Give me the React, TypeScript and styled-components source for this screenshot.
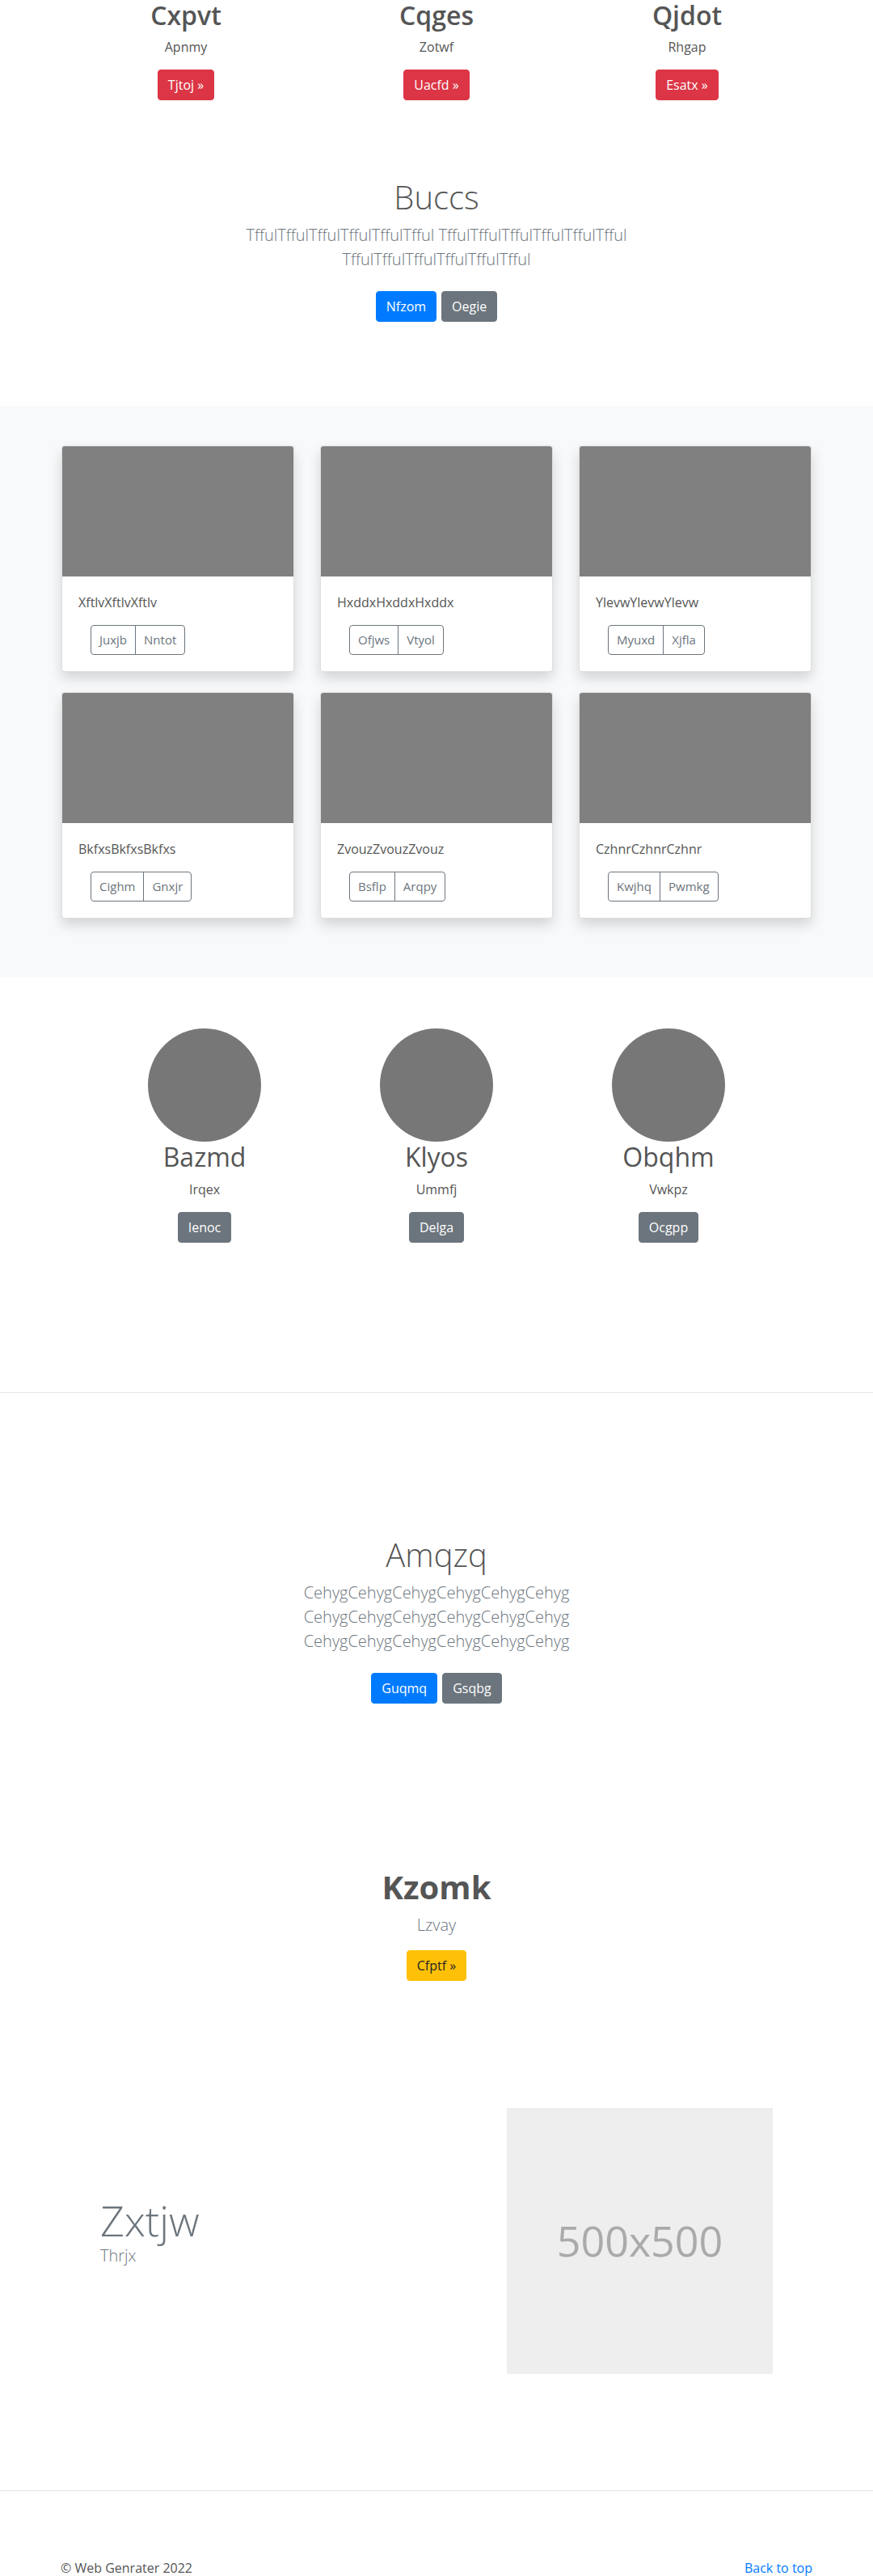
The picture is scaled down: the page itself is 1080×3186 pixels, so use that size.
import React from "react";
import styled, { createGlobalStyle, css } from "styled-components";

const GlobalStyle = createGlobalStyle`
  * { box-sizing: border-box; }
  html, body { margin: 0; padding: 0; }
  body {
    font-family: "Open Sans", "Noto Sans", "Liberation Sans", sans-serif;
    font-size: 16px;
    line-height: 1.5;
    color: #555;
    background: #fff;
  }
  h1, h2, p { margin: 0; }
`;

type Variant = "primary" | "secondary" | "danger" | "warning";

const variants: Record<Variant, ReturnType<typeof css>> = {
  primary: css`background: #007bff; border-color: #007bff; color: #fff;`,
  secondary: css`background: #6c757d; border-color: #6c757d; color: #fff;`,
  danger: css`background: #dc3545; border-color: #dc3545; color: #fff;`,
  warning: css`background: #ffc107; border-color: #ffc107; color: #212529;`,
};

const Btn = styled.a<{ $variant: Variant }>`
  display: inline-block;
  font-size: 16px;
  line-height: 24px;
  padding: 6px 12px;
  border: 1px solid transparent;
  border-radius: 4px;
  text-decoration: none;
  cursor: pointer;
  ${(p) => variants[p.$variant]}
`;

const Container = styled.div`
  max-width: 960px;
  margin: 0 auto;
  padding: 0 15px;
`;

/* ---------- Features ---------- */
const FeatureSection = styled.section`
  padding: 0;
`;

const ThreeCols = styled.div<{ $width?: number }>`
  display: grid;
  grid-template-columns: repeat(3, 1fr);
  max-width: ${(p) => p.$width ?? 960}px;
  margin: 0 auto;
  text-align: center;
`;

const FeatureTitle = styled.h2`
  font-size: 32px;
  font-weight: 600;
  line-height: 1.2;
  margin-bottom: 8px;
  color: #555;
`;

const BodyText = styled.p`
  margin-bottom: 16px;
`;

/* ---------- Hero / CTA ---------- */
const HeroSection = styled.section<{ $pt: number; $pb: number }>`
  padding: ${(p) => p.$pt}px 0 ${(p) => p.$pb}px;
  text-align: center;
`;

const HeroInner = styled.div`
  max-width: 520px;
  margin: 0 auto;
`;

const LightTitle = styled.h1`
  font-size: 40px;
  font-weight: 300;
  line-height: 1.2;
  margin-bottom: 8px;
  color: #555;
`;

const Lead = styled.p`
  font-size: 20px;
  font-weight: 300;
  line-height: 1.5;
  color: #6c757d;
  margin-bottom: 16px;
`;

const ButtonRow = styled.div`
  display: flex;
  justify-content: center;
  gap: 6px;
  padding: 8px 0;
`;

/* ---------- Album ---------- */
const AlbumSection = styled.section`
  background: #f8f9fa;
  padding: 49px 0 72px;
`;

const CardGrid = styled.div`
  display: grid;
  grid-template-columns: repeat(3, 288px);
  justify-content: center;
  column-gap: 32px;
  row-gap: 25px;
`;

const Card = styled.div`
  background: #fff;
  border: 1px solid rgba(0, 0, 0, 0.125);
  border-radius: 4px;
  overflow: hidden;
  box-shadow: 0 8px 16px rgba(0, 0, 0, 0.15);
`;

const CardImage = styled.div`
  height: 161px;
  background: #808080;
`;

const CardBody = styled.div`
  padding: 20px;
`;

const CardText = styled.p`
  margin-bottom: 16px;
`;

const BtnGroup = styled.div`
  display: inline-flex;
  margin-left: 15px;
`;

const GroupBtn = styled.button<{ $first?: boolean }>`
  font-family: inherit;
  font-size: 15px;
  line-height: 23px;
  padding: 6px 10px;
  background: transparent;
  color: #6c757d;
  border: 1px solid #6c757d;
  border-radius: ${(p) => (p.$first ? "4px 0 0 4px" : "0 4px 4px 0")};
  margin-left: ${(p) => (p.$first ? "0" : "-1px")};
  cursor: pointer;
`;

/* ---------- Team ---------- */
const TeamSection = styled.section`
  padding: 64px 0 185px;
`;

const Avatar = styled.div`
  width: 140px;
  height: 140px;
  border-radius: 50%;
  background: #777;
  margin: 0 auto;
`;

const MemberName = styled.h2`
  font-size: 32px;
  font-weight: 400;
  line-height: 1.2;
  margin-bottom: 8px;
  color: #555;
`;

const Divider = styled.hr`
  margin: 0;
  border: 0;
  border-top: 1px solid #e5e5e5;
`;

/* ---------- Kzomk ---------- */
const BoldTitle = styled.h1`
  font-size: 40px;
  font-weight: 700;
  line-height: 1.2;
  margin-bottom: 8px;
  color: #555;
`;

/* ---------- Split ---------- */
const SplitSection = styled.section`
  padding: 157px 124px 144px;
  display: grid;
  grid-template-columns: 1fr 329px;
  align-items: center;
`;

const SplitText = styled.div`
  margin-bottom: 24px;
`;

const DisplayTitle = styled.h1`
  font-size: 52px;
  font-weight: 300;
  line-height: 1.2;
  color: #6c757d;
`;

const Muted = styled.p`
  font-size: 20px;
  font-weight: 300;
  line-height: 1.3;
  color: #6c757d;
`;

const Placeholder = styled.div`
  width: 329px;
  height: 329px;
  background: #eee;
  color: #aaa;
  font-size: 52px;
  display: flex;
  align-items: center;
  justify-content: center;
`;

/* ---------- Footer ---------- */
const Footer = styled.footer`
  padding: 83px 0 48px;
`;

const FooterRow = styled.div`
  display: flex;
  justify-content: space-between;
  align-items: center;
`;

const FooterLink = styled.a`
  color: #007bff;
  text-decoration: none;
`;

const features = [
  { t: "Cxpvt", s: "Apnmy", b: "Tjtoj »" },
  { t: "Cqges", s: "Zotwf", b: "Uacfd »" },
  { t: "Qjdot", s: "Rhgap", b: "Esatx »" },
];

const cards = [
  { text: "XftlvXftlvXftlv", a: "Juxjb", b: "Nntot" },
  { text: "HxddxHxddxHxddx", a: "Ofjws", b: "Vtyol" },
  { text: "YlevwYlevwYlevw", a: "Myuxd", b: "Xjfla" },
  { text: "BkfxsBkfxsBkfxs", a: "Cighm", b: "Gnxjr" },
  { text: "ZvouzZvouzZvouz", a: "Bsflp", b: "Arqpy" },
  { text: "CzhnrCzhnrCzhnr", a: "Kwjhq", b: "Pwmkg" },
];

const team = [
  { n: "Bazmd", r: "Irqex", b: "Ienoc" },
  { n: "Klyos", r: "Ummfj", b: "Delga" },
  { n: "Obqhm", r: "Vwkpz", b: "Ocgpp" },
];

export default function App() {
  return (
    <>
      <GlobalStyle />
      <FeatureSection>
        <Container>
          <ThreeCols>
            {features.map((f) => (
              <div key={f.t}>
                <FeatureTitle>{f.t}</FeatureTitle>
                <BodyText>{f.s}</BodyText>
                <Btn $variant="danger">{f.b}</Btn>
              </div>
            ))}
          </ThreeCols>
        </Container>
      </FeatureSection>

      <HeroSection $pt={96} $pb={96}>
        <HeroInner>
          <LightTitle>Buccs</LightTitle>
          <Lead>
            TffulTffulTffulTffulTffulTfful TffulTffulTffulTffulTffulTfful TffulTffulTffulTffulTffulTfful
          </Lead>
          <ButtonRow>
            <Btn $variant="primary">Nfzom</Btn>
            <Btn $variant="secondary">Oegie</Btn>
          </ButtonRow>
        </HeroInner>
      </HeroSection>

      <AlbumSection>
        <CardGrid>
          {cards.map((c) => (
            <Card key={c.text}>
              <CardImage />
              <CardBody>
                <CardText>{c.text}</CardText>
                <BtnGroup>
                  <GroupBtn $first>{c.a}</GroupBtn>
                  <GroupBtn>{c.b}</GroupBtn>
                </BtnGroup>
              </CardBody>
            </Card>
          ))}
        </CardGrid>
      </AlbumSection>

      <TeamSection>
        <ThreeCols $width={861}>
          {team.map((m) => (
            <div key={m.n}>
              <Avatar />
              <MemberName>{m.n}</MemberName>
              <BodyText>{m.r}</BodyText>
              <Btn $variant="secondary">{m.b}</Btn>
            </div>
          ))}
        </ThreeCols>
      </TeamSection>

      <Divider />

      <HeroSection $pt={176} $pb={0}>
        <HeroInner>
          <LightTitle>Amqzq</LightTitle>
          <Lead>
            CehygCehygCehygCehygCehygCehyg CehygCehygCehygCehygCehygCehyg CehygCehygCehygCehygCehygCehyg
          </Lead>
          <ButtonRow>
            <Btn $variant="primary">Guqmq</Btn>
            <Btn $variant="secondary">Gsqbg</Btn>
          </ButtonRow>
        </HeroInner>
      </HeroSection>

      <HeroSection $pt={195} $pb={0}>
        <BoldTitle>Kzomk</BoldTitle>
        <Lead>Lzvay</Lead>
        <Btn $variant="warning">Cfptf »</Btn>
      </HeroSection>

      <SplitSection>
        <SplitText>
          <DisplayTitle>Zxtjw</DisplayTitle>
          <Muted>Thrjx</Muted>
        </SplitText>
        <Placeholder>500x500</Placeholder>
      </SplitSection>

      <Divider />

      <Footer>
        <Container>
          <FooterRow>
            <p>© Web Genrater 2022</p>
            <FooterLink href="#">Back to top</FooterLink>
          </FooterRow>
        </Container>
      </Footer>
    </>
  );
}
